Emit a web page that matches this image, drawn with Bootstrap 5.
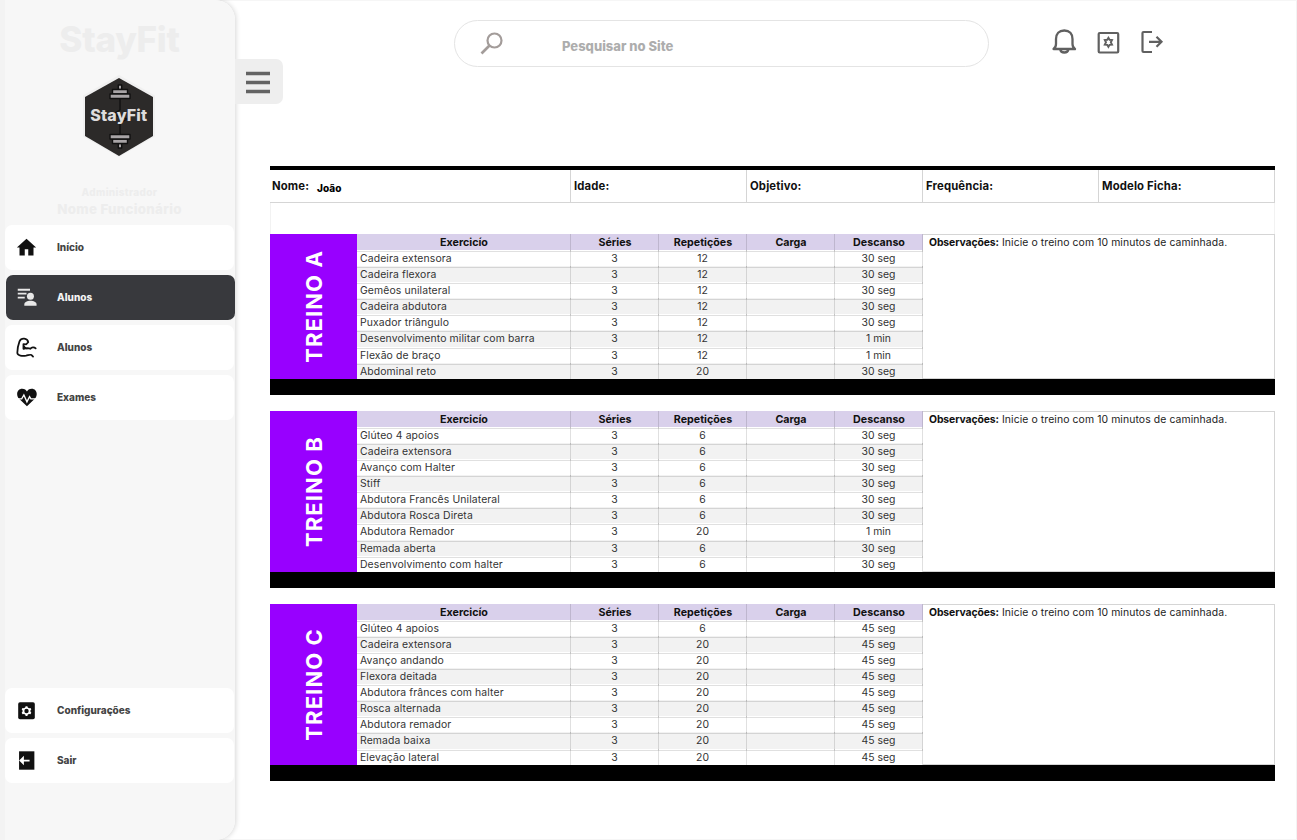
<!DOCTYPE html>
<html lang="pt-BR">
<head>
<meta charset="utf-8">
<meta name="viewport" content="width=device-width, initial-scale=1">
<title>StayFit</title>
<link href="https://cdn.jsdelivr.net/npm/bootstrap@5.3.0/dist/css/bootstrap.min.css" rel="stylesheet">
<style>
  :root { --row: 16.08px; }
  body { font-family: Inter, "Open Sans", sans-serif; height: 840px; overflow: hidden; background: #fff; color: #111; }
  .app { height: 840px; border-top: 1px solid #f6f6f6; border-right: 1px solid #f3f3f3; border-bottom: 1px solid #f6f6f6; }
  .sidebar { width: 235px; margin: -1px 0; padding: 0 1px 52px 5px; background: linear-gradient(90deg, #f3f3f3 5px, #f7f7f7 5px); border-radius: 0 20px 20px 0; box-shadow: 1px 0 5px rgba(0,0,0,.16); }
  .brand { height: 225.4px; color: #ededed; font-weight: 800; }
  .brand-title { font-size: 35px; line-height: 40px; margin-top: 19px; letter-spacing: -.25px; }
  .brand-logo { margin-top: 15px; margin-bottom: 27px; margin-right: 1px; }
  .brand-role { font-size: 10px; line-height: 14px; letter-spacing: .35px; }
  .brand-user { font-size: 13.3px; line-height: 21px; letter-spacing: .3px; }
  .side-link { height: 45px; margin-bottom: 5px; background: #fff; border-radius: 7px; color: #444; font-size: 10px; font-weight: 800; padding: 0 0 1px 11px; }
  .side-link svg { width: 21px; height: 21px; margin-right: 20px; flex: none; }
  .side-link.active { background: #38393d; color: #f3f3f3; margin-left: 1px; margin-right: -1px; padding-left: 10px; }
  .menu-btn { width: 48px; height: 45px; margin-top: 58px; background: #eee; border-radius: 0 7px 7px 0; border: 0; padding: 0; }
  .search { width: 535px; height: 47px; margin: 19px 0 0 171px; border: 1px solid #e4e4e4; color: #adadad; font-size: 13px; font-weight: 800; padding-left: 25px; }
  .search span { margin: 6px 0 0 58px; letter-spacing: 0; }
  .tools { margin: 26px 0 0 61px; gap: 16px; color: #606060; }
  .sheet { width: 1005px; margin: 62px 0 0 35px; border-top: 4px solid #000; font-size: 10.4px; line-height: var(--row); }
  .info { grid-template-columns: 301px 176px 176px 176px 176px; height: 33px; border-bottom: 1px solid #d5d5d5; font-weight: 700; font-size: 11.3px; letter-spacing: .15px; }
  .info > div { border-right: 1px solid #d5d5d5; padding: 8px 0 0 2px; }
  .info > div + div { padding-left: 3px; }
  .info .who { font-size: 10px; font-weight: 800; letter-spacing: 0; margin-left: 8px; position: relative; top: 2px; color: #000; }
  .blank { height: 31px; border: solid #f2f2f2; border-width: 0 1px; }
  .plan { grid-template-columns: 87px 566px 352px; border-bottom: var(--row) solid #000; margin-bottom: var(--row); }
  .plan + .plan { margin-top: calc(var(--row) + .1px); }
  .plan-name { background: #9800ff; }
  .plan-name span { writing-mode: vertical-rl; transform: rotate(180deg); color: #fff; font-size: 22px; font-weight: 700; line-height: 26px; letter-spacing: 1.1px; }
  .line { display: grid; grid-template-columns: 214px 88px 88px 88px 88px; height: var(--row); text-align: center; color: #333; }
  .line > div { border-right: 1px solid rgba(0,0,0,.12); border-bottom: 1px solid rgba(0,0,0,.12); white-space: nowrap; padding-top: 1px; }
  .line > div:first-child { text-align: left; padding-left: 3px; }
  .line:not(.heading) > div:first-child { letter-spacing: .12px; }
  .line:nth-child(odd) { background: #f2f2f2; }
  .line.heading { background: #d9d0eb; font-weight: 700; color: #111; font-size: 10.7px; }
  .line.heading > div { padding-top: .8px; padding-left: 1px; }
  .line.heading > div:first-child { text-align: center; }
  .notes { border: 1px solid #d5d5d5; border-left: 0; padding-left: 6px; color: #222; letter-spacing: .1px; }
  .notes b { letter-spacing: -.1px; color: #111; }
</style>
</head>
<body>
<div class="app d-flex">
  <aside class="sidebar d-flex flex-column flex-shrink-0">
    <div class="brand d-flex flex-column align-items-center">
      <div class="brand-title">StayFit</div>
      <svg class="brand-logo flex-shrink-0" width="74" height="84" viewBox="0 0 74 84">
        <path d="M37 1 73 21.500V62.500L37 83 1 62.500V21.500Z" fill="#f0f0f0"/>
        <path d="M37 4 71 23V62L37 82 3 62V23Z" fill="#2c2a29"/>
        <g id="bell-half" stroke="#111" stroke-width="1.400" stroke-linejoin="round" fill="#a8a4a6">
          <path d="M38 24v12l-7 4 10 3" fill="none"/>
          <rect x="36.300" y="11" width="3.400" height="4.500"/>
          <rect x="30.500" y="15.500" width="15" height="4.500"/>
          <rect x="28" y="20" width="20" height="4.500"/>
        </g>
        <use href="#bell-half" transform="rotate(180 38 42.500)"/>
        <text x="36.700" y="46.800" text-anchor="middle" textLength="57" font-family="Inter" font-weight="800" font-size="16" fill="#dedcdc">StayFit</text>
      </svg>
      <div class="brand-role">Administrador</div>
      <div class="brand-user">Nome Funcionário</div>
    </div>
    <nav class="d-flex flex-column flex-grow-1">
      <a class="side-link d-flex align-items-center text-decoration-none"><svg viewBox="0 0 24 24" fill="#111"><path d="M12 2 1 12h3v9h6v-7h4v7h6v-9h3Z"/></svg>Início</a>
      <a class="side-link active d-flex align-items-center text-decoration-none"><svg viewBox="0 0 24 24" fill="#e8e8e8"><path d="M2 2h14v2.200H2ZM2 6.500h10v2.200H2ZM2 11h8v2.200H2Z"/><circle cx="16.500" cy="10.500" r="4"/><path d="M9.500 21.500v-1.500c0-5.700 14-5.700 14 0v1.500Z"/></svg>Alunos</a>
      <a class="side-link d-flex align-items-center text-decoration-none"><svg viewBox="0 0 24 24" fill="none" stroke="#111" stroke-width="2" stroke-linecap="round" stroke-linejoin="round"><path d="M22.500 13c-2-2-4.500-1.500-6 .5-2.500-1.500-5-1-8 0V8l3 .5 2.500-2.500C13 1 6 .5 4 5 2.500 9 1.500 14 1.500 18c0 3.500 6 4 10 3.300 3-.6 5-1.500 6-.8l2 2M8.500 9.500c.5 2 2 3.500 4 3.800"/></svg>Alunos</a>
      <a class="side-link d-flex align-items-center text-decoration-none"><svg viewBox="0 0 24 24"><path d="M12.500 22 3.500 13.500C-1 8 2 2 7 2c3 0 4.500 1.500 5.500 3 1-1.500 2.500-3 5.500-3 5 0 8 6 3.500 11.500Z" fill="#111"/><path d="M0 13.500h6.500l2.500-4.500 3.500 8 3-6 1.500 2.500H24" fill="none" stroke="#fff" stroke-width="1.500"/></svg>Exames</a>
      <a class="side-link d-flex align-items-center text-decoration-none mt-auto"><svg viewBox="0 0 24 24"><rect x="2.500" y="2.500" width="19" height="19.500" rx="2" fill="#111"/><path d="m11 7-.5 1.500-1.500.8-1.500-.3-1 1.700 1 1.300v1.200l-1 1.300 1 1.700L9 15.900l1.500.8.5 1.500h2l.5-1.500 1.500-.8 1.500.3 1-1.700-1-1.300V12l1-1.300-1-1.700-1.500.3-1.500-.8L13 7Zm1 3.100a2.500 2.500 0 1 1 0 5 2.500 2.500 0 0 1 0-5" fill="#fff" fill-rule="evenodd"/></svg>Configurações</a>
      <a class="side-link d-flex align-items-center text-decoration-none"><svg viewBox="0 0 24 24"><path d="M3.500 1.500h17.500v21h-17.500Z" fill="#111"/><path d="M15.500 12H6M8 9 5 12l3 3Z" stroke="#fff" stroke-width="2" fill="#fff"/></svg>Sair</a>
    </nav>
  </aside>
  <main class="flex-grow-1">
    <header class="d-flex align-items-start">
      <button class="menu-btn" aria-label="Menu"><svg class="d-block" width="48" height="45" viewBox="0 0 48 45"><path d="M11 14.500h24M11 23.500h24M11 32.500h24" stroke="#636363" stroke-width="3.500"/></svg></button>
      <div class="search d-flex align-items-center rounded-pill">
        <svg width="24" height="24" viewBox="0 0 24 24" fill="none" stroke="#a39c9a" stroke-width="2.200"><circle cx="14.500" cy="8.500" r="7"/><path d="M9.500 13.500 1.500 21.500" stroke-width="2.700"/></svg>
        <span>Pesquisar no Site</span>
      </div>
      <div class="tools d-flex">
        <svg width="28" height="28" viewBox="0 0 28 28" fill="none" stroke="currentColor" stroke-width="2.300" stroke-linejoin="round"><path d="M3.500 22c1.500-1 2.500-3 2.500-5v-5c0-5 3-8.500 8.300-8.500S22.500 7 22.500 12v5c0 2 1 4 2.500 5Z"/><path d="M10.300 22.500c.6 4 7.400 4 8 0"/></svg>
        <svg width="28" height="28" viewBox="0 0 28 28" fill="none" stroke="currentColor" stroke-width="2.200"><rect x="4.700" y="6" width="19.500" height="19.500" rx="1"/><path d="m14.400 10.800 1.200 2 2.400.2-1.200 2.300 1.200 2.300-2.400.2-1.200 2-1.200-2-2.400-.2 1.200-2.300-1.200-2.300 2.400-.2Z" stroke-width="1.900"/></svg>
        <svg width="28" height="28" viewBox="0 0 28 28" fill="none" stroke="currentColor" stroke-width="2.200"><path d="M14 5H5.500a1 1 0 0 0-1 1v18a1 1 0 0 0 1 1H14M11 14.800h12M18.500 9.800l5 5-5 5"/></svg>
      </div>
    </header>
    <section class="sheet">
      <div class="info d-grid">
        <div>Nome:<span class="who">João</span></div><div>Idade:</div><div>Objetivo:</div><div>Frequência:</div><div>Modelo Ficha:</div>
      </div>
      <div class="blank"></div>
      <div id="plans"></div>
    </section>
  </main>
</div>
<script src="https://cdn.jsdelivr.net/npm/bootstrap@5.3.0/dist/js/bootstrap.bundle.min.js"></script>
<script>
  const plans = {
    'TREINO A': [['Cadeira extensora',12,'30 seg'],['Cadeira flexora',12,'30 seg'],['Gemêos unilateral',12,'30 seg'],['Cadeira abdutora',12,'30 seg'],['Puxador triângulo',12,'30 seg'],['Desenvolvimento militar com barra',12,'1 min'],['Flexão de braço',12,'1 min'],['Abdominal reto',20,'30 seg']],
    'TREINO B': [['Glúteo 4 apoios',6,'30 seg'],['Cadeira extensora',6,'30 seg'],['Avanço com Halter',6,'30 seg'],['Stiff',6,'30 seg'],['Abdutora Francês Unilateral',6,'30 seg'],['Abdutora Rosca Direta',6,'30 seg'],['Abdutora Remador',20,'1 min'],['Remada aberta',6,'30 seg'],['Desenvolvimento com halter',6,'30 seg']],
    'TREINO C': [['Glúteo 4 apoios',6,'45 seg'],['Cadeira extensora',20,'45 seg'],['Avanço andando',20,'45 seg'],['Flexora deitada',20,'45 seg'],['Abdutora frânces com halter',20,'45 seg'],['Rosca alternada',20,'45 seg'],['Abdutora remador',20,'45 seg'],['Remada baixa',20,'45 seg'],['Elevação lateral',20,'45 seg']]
  };
  const line = (cells, cls = '') => `<div class="line ${cls}">${cells.map(c => `<div>${c}</div>`).join('')}</div>`;
  document.getElementById('plans').innerHTML = Object.entries(plans).map(([name, rows]) => `
    <div class="plan d-grid">
      <div class="plan-name d-flex align-items-center justify-content-center"><span>${name}</span></div>
      <div>${line(['Exercicío', 'Séries', 'Repetições', 'Carga', 'Descanso'], 'heading')}${rows.map(([e, r, d]) => line([e, 3, r, '', d])).join('')}</div>
      <div class="notes"><b>Observações:</b> Inicie o treino com 10 minutos de caminhada.</div>
    </div>`).join('');
</script>
</body>
</html>
